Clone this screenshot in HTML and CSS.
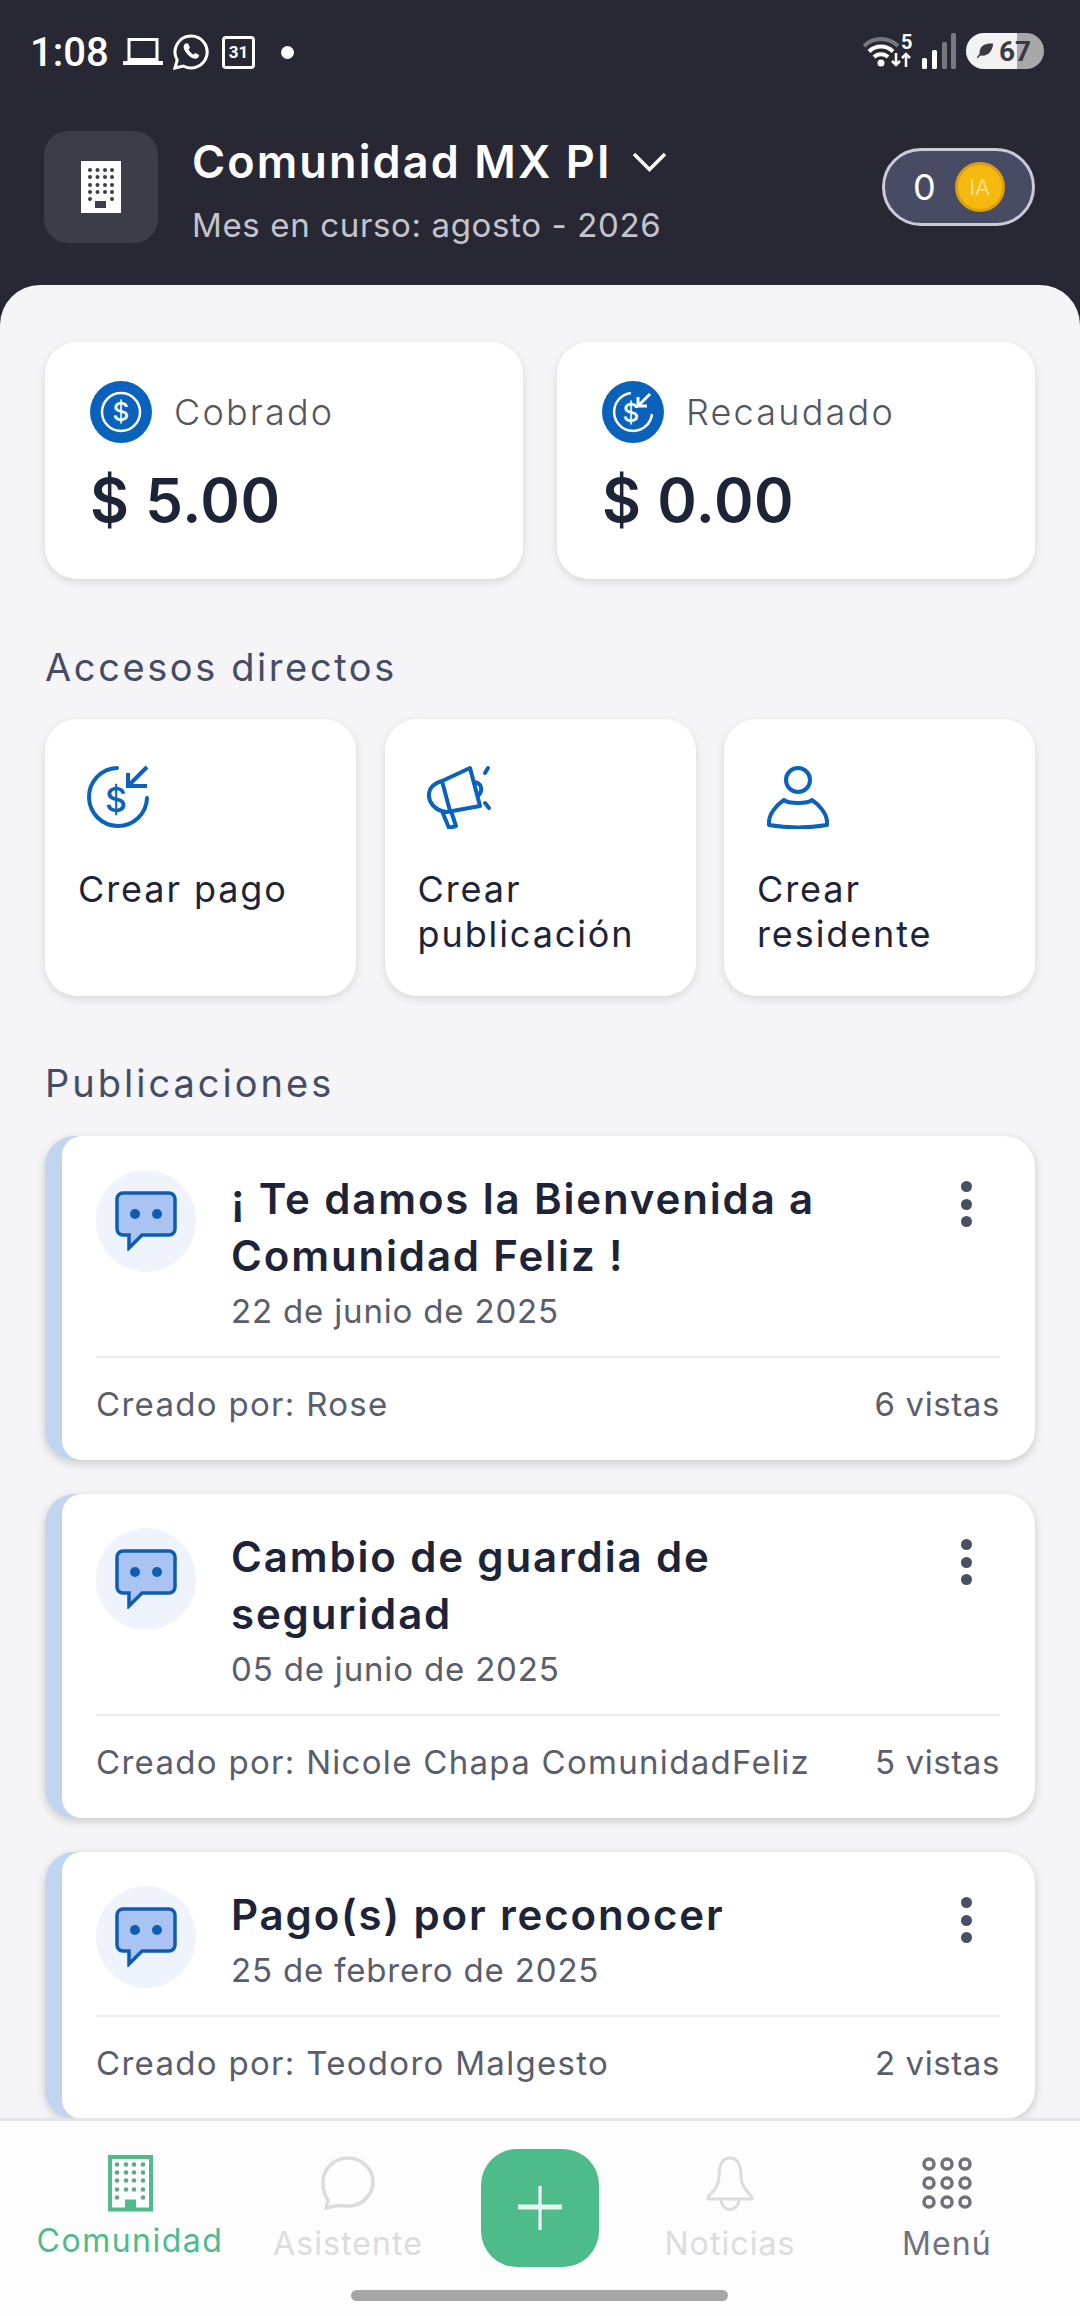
FILE: index.html
```html
<!DOCTYPE html>
<html>
<head>
  <link rel="stylesheet" href="styles.css">
</head>
<body>
  <div class="status-bar">
    <div class="status-left">
      <span class="clock">1:08</span>
      <svg class="st-laptop" width="40" height="30" viewBox="0 0 40 30"><path d="M6 2.500h28v20H6z" fill="none" stroke="#fff" stroke-width="3"/><path d="M1 26h38" stroke="#fff" stroke-width="4" stroke-linecap="round"/></svg>
      <svg class="st-wa" width="36" height="36" viewBox="0 0 36 36"><path d="M18 2a16 16 0 1 1-7.600 30L2 34l2.200-8A16 16 0 0 1 18 2z" fill="none" stroke="#fff" stroke-width="3"/><path d="M12.500 9.500c-2.500 1.500-2.500 5 .5 9s7.500 7 10.500 6c2-.7 3-2.500 2.500-3.500l-3.500-2-2 1.500c-2-.8-4-3-5-5l1.500-2-2-4z" fill="#fff"/></svg>
      <div class="st-cal">31</div>
      <span class="st-dot"></span>
    </div>
    <div class="status-right">
      <svg width="50" height="44" viewBox="0 -4 50 44">
        <path d="M1 13a24 24 0 0 1 34 0" fill="none" stroke="#77777f" stroke-width="4"/>
        <path d="M6 18.500a17 17 0 0 1 24 0M11 24a10 10 0 0 1 14 0" fill="none" stroke="#fff" stroke-width="4"/>
        <circle cx="18" cy="30" r="3.500" fill="#fff"/>
        <text x="38" y="16" class="st-five">5</text>
        <path d="M33 20v12m-4-4 4 4 4-4M43 34V21m-4 4 4-4 4 4" fill="none" stroke="#fff" stroke-width="2.500"/>
      </svg>
      <svg class="st-signal" width="34" height="36" viewBox="0 0 34 36">
        <rect x="0" y="25" width="5" height="11" rx="1.500" fill="#fff"/>
        <rect x="10" y="17" width="5" height="19" rx="1.500" fill="#fff"/>
        <rect x="20" y="9" width="5" height="27" rx="1.500" fill="#77777f"/>
        <rect x="29" y="0" width="5" height="36" rx="1.500" fill="#77777f"/>
      </svg>
      <div class="st-battery">
        <svg width="20" height="20" viewBox="0 0 20 22"><path d="M19 3C9 2 4 6 4 14l-3 4 1 1 3-3c8 1 13-4 14-13z" fill="#3b3b42"/></svg>
        <span>67</span>
      </div>
    </div>
  </div>

  <div class="header">
    <div class="logo-box">
      <svg width="40" height="52" viewBox="0 0 40 52" fill="#3d3d49">
        <rect width="40" height="52" fill="#fff"/>
        <circle cx="9" cy="9" r="2"/><circle cx="16.500" cy="9" r="2"/><circle cx="24" cy="9" r="2"/><circle cx="31" cy="9" r="2"/>
        <circle cx="9" cy="16" r="2"/><circle cx="16.500" cy="16" r="2"/><circle cx="24" cy="16" r="2"/><circle cx="31" cy="16" r="2"/>
        <circle cx="9" cy="24" r="2"/><circle cx="16.500" cy="24" r="2"/><circle cx="24" cy="24" r="2"/><circle cx="31" cy="24" r="2"/>
        <circle cx="9" cy="31" r="2"/><circle cx="16.500" cy="31" r="2"/><circle cx="24" cy="31" r="2"/><circle cx="31" cy="31" r="2"/>
        <circle cx="9" cy="38" r="2"/><circle cx="31" cy="38" r="2"/>
        <rect x="14" y="40" width="11" height="7"/>
      </svg>
    </div>
    <div class="community">
      <div class="community-name">
        Comunidad MX PI
        <svg width="37" height="22" viewBox="0 0 37 22"><path d="M3 3l15.500 15.500L34 3" fill="none" stroke="#fff" stroke-width="3.500"/></svg>
      </div>
      <div class="community-month">Mes en curso: agosto - 2026</div>
    </div>
    <div class="credits">
      <span class="credits-num">0</span>
      <span class="coin">IA</span>
    </div>
  </div>

  <div class="main">
    <div class="stats">
      <div class="stat-card">
        <div class="stat-top">
          <svg width="62" height="62" viewBox="0 0 62 62">
            <circle cx="31" cy="31" r="31" fill="#0a62bd"/>
            <circle cx="31" cy="31" r="19" fill="none" stroke="#fff" stroke-width="2.500"/>
            <text x="31" y="40" class="svg-dollar">$</text>
          </svg>
          <span class="stat-label">Cobrado</span>
        </div>
        <div class="stat-value">$ 5.00</div>
      </div>
      <div class="stat-card">
        <div class="stat-top">
          <svg width="62" height="62" viewBox="0 0 62 62">
            <circle cx="31" cy="31" r="31" fill="#0a62bd"/>
            <path d="M29 12a19 19 0 1 0 21 21" fill="none" stroke="#fff" stroke-width="2.500"/>
            <path d="M48 13L36 25m0-9v9h9" fill="none" stroke="#fff" stroke-width="3"/>
            <text x="29" y="41" class="svg-dollar">$</text>
          </svg>
          <span class="stat-label">Recaudado</span>
        </div>
        <div class="stat-value">$ 0.00</div>
      </div>
    </div>

    <h2 class="section-title">Accesos directos</h2>
    <div class="shortcuts">
      <div class="shortcut">
        <svg class="icon-pay" width="66" height="64" viewBox="0 0 66 64">
          <path d="M33 3a29 29 0 1 0 30 30" fill="none" stroke="#0a62bd" stroke-width="4" stroke-linecap="round"/>
          <path d="M63 2L44 21m0-13v13h19" fill="none" stroke="#0a62bd" stroke-width="4"/>
          <text x="32" y="47" class="svg-dollar-blue">$</text>
        </svg>
        <div class="shortcut-label">Crear pago</div>
      </div>
      <div class="shortcut">
        <svg width="66" height="64" viewBox="0 0 66 64">
          <path d="M16 16L44 3l10 38-33 6C8 46 2 36 3 28c1-7 6-10 13-12zM16 16l8 30M16 46l7 17 7-2-5-15" fill="none" stroke="#0a62bd" stroke-width="4" stroke-linejoin="round"/>
          <path d="M49 17c5 1 7 5 6 9-1 3-3 5-5 5" fill="none" stroke="#0a62bd" stroke-width="4"/>
          <path d="M59 8l3-5M59 38l4 5" stroke="#0a62bd" stroke-width="4" stroke-linecap="round"/>
        </svg>
        <div class="shortcut-label">Crear publicación</div>
      </div>
      <div class="shortcut">
        <svg width="66" height="64" viewBox="0 0 66 64">
          <circle cx="33" cy="15" r="12" fill="none" stroke="#0a62bd" stroke-width="4"/>
          <path d="M19 35c4 4 24 4 28 0 6 4 15 13 15 22v3c-18 3-40 3-58 0v-3c0-9 9-18 15-22z" fill="none" stroke="#0a62bd" stroke-width="4" stroke-linejoin="round"/>
        </svg>
        <div class="shortcut-label">Crear residente</div>
      </div>
    </div>

    <h2 class="section-title">Publicaciones</h2>
    <div class="posts">
      <div class="post">
        <div class="post-body">
          <div class="post-top">
            <div class="post-icon">
              <svg width="62" height="60" viewBox="0 0 62 60"><path d="M8 2h46a6 6 0 0 1 6 6v30a6 6 0 0 1-6 6H27L14 57V44H8a6 6 0 0 1-6-6V8a6 6 0 0 1 6-6z" fill="#a9c4f2" stroke="#0f5db0" stroke-width="3.500"/><circle cx="20" cy="23" r="5" fill="#0f5db0"/><circle cx="42" cy="23" r="5" fill="#0f5db0"/></svg>
            </div>
            <div class="post-text">
              <div class="post-title">¡ Te damos la Bienvenida a Comunidad Feliz !</div>
              <div class="post-date">22 de junio de 2025</div>
            </div>
            <div class="post-more"><i></i><i></i><i></i></div>
          </div>
          <div class="post-foot"><span>Creado por: Rose</span><span>6 vistas</span></div>
        </div>
      </div>
      <div class="post">
        <div class="post-body">
          <div class="post-top">
            <div class="post-icon">
              <svg width="62" height="60" viewBox="0 0 62 60"><path d="M8 2h46a6 6 0 0 1 6 6v30a6 6 0 0 1-6 6H27L14 57V44H8a6 6 0 0 1-6-6V8a6 6 0 0 1 6-6z" fill="#a9c4f2" stroke="#0f5db0" stroke-width="3.500"/><circle cx="20" cy="23" r="5" fill="#0f5db0"/><circle cx="42" cy="23" r="5" fill="#0f5db0"/></svg>
            </div>
            <div class="post-text">
              <div class="post-title">Cambio de guardia de seguridad</div>
              <div class="post-date">05 de junio de 2025</div>
            </div>
            <div class="post-more"><i></i><i></i><i></i></div>
          </div>
          <div class="post-foot"><span>Creado por: Nicole Chapa ComunidadFeliz</span><span>5 vistas</span></div>
        </div>
      </div>
      <div class="post">
        <div class="post-body">
          <div class="post-top">
            <div class="post-icon">
              <svg width="62" height="60" viewBox="0 0 62 60"><path d="M8 2h46a6 6 0 0 1 6 6v30a6 6 0 0 1-6 6H27L14 57V44H8a6 6 0 0 1-6-6V8a6 6 0 0 1 6-6z" fill="#a9c4f2" stroke="#0f5db0" stroke-width="3.500"/><circle cx="20" cy="23" r="5" fill="#0f5db0"/><circle cx="42" cy="23" r="5" fill="#0f5db0"/></svg>
            </div>
            <div class="post-text">
              <div class="post-title">Pago(s) por reconocer</div>
              <div class="post-date">25 de febrero de 2025</div>
            </div>
            <div class="post-more"><i></i><i></i><i></i></div>
          </div>
          <div class="post-foot"><span>Creado por: Teodoro Malgesto</span><span>2 vistas</span></div>
        </div>
      </div>
    </div>
  </div>

  <div class="bottom-nav">
    <div class="nav-row">
      <div class="nav-item active">
        <svg width="45" height="57" viewBox="0 0 45 57" fill="#5ea88a">
          <rect x="2" y="2.500" width="41" height="52.500" fill="#fff" stroke="#4dbb8a" stroke-width="4"/>
          <circle cx="9" cy="10" r="2.300"/><circle cx="18" cy="10" r="2.300"/><circle cx="26" cy="10" r="2.300"/><circle cx="35" cy="10" r="2.300"/>
          <circle cx="9" cy="18" r="2.300"/><circle cx="18" cy="18" r="2.300"/><circle cx="26" cy="18" r="2.300"/><circle cx="35" cy="18" r="2.300"/>
          <circle cx="9" cy="26" r="2.300"/><circle cx="18" cy="26" r="2.300"/><circle cx="26" cy="26" r="2.300"/><circle cx="35" cy="26" r="2.300"/>
          <circle cx="9" cy="35" r="2.300"/><circle cx="18" cy="35" r="2.300"/><circle cx="26" cy="35" r="2.300"/><circle cx="35" cy="35" r="2.300"/>
          <circle cx="9" cy="43" r="2.300"/><circle cx="35" cy="43" r="2.300"/>
          <rect x="17" y="45" width="11" height="10" fill="#4dbb8a"/>
        </svg>
        <span>Comunidad</span>
      </div>
      <div class="nav-item muted">
        <svg width="56" height="56" viewBox="0 0 56 56"><path d="M28 3c14 0 25 11 25 24S42 51 28 51c-5 0-9-1-13 0l-9 2 2-8C4 40 3 34 3 27 3 14 14 3 28 3z" fill="none" stroke="#dcdcdf" stroke-width="3.500" stroke-linejoin="round"/></svg>
        <span>Asistente</span>
      </div>
      <div class="nav-fab">
        <svg width="46" height="46" viewBox="0 0 46 46"><path d="M23 1v44M1 22h44" stroke="#fff" stroke-width="3"/><path d="M1 22h44" stroke="#e8f7f0" stroke-width="5"/></svg>
      </div>
      <div class="nav-item muted">
        <svg width="48" height="56" viewBox="0 0 48 56"><path d="M24 3c8 0 11 8 11 18 0 10 5 14 11 21v2H2v-2c6-7 11-11 11-21C13 11 16 3 24 3zM15 44c0 14 18 14 18 0" fill="none" stroke="#dcdcdf" stroke-width="3" stroke-linejoin="round"/></svg>
        <span>Noticias</span>
      </div>
      <div class="nav-item dark">
        <svg width="52" height="52" viewBox="0 0 52 52" fill="none" stroke="#70717c" stroke-width="3.500">
          <circle cx="8" cy="7" r="5"/><circle cx="26" cy="7" r="5"/><circle cx="44" cy="7" r="5"/>
          <circle cx="8" cy="26" r="5"/><circle cx="26" cy="26" r="5"/><circle cx="44" cy="26" r="5"/>
          <circle cx="8" cy="45" r="5"/><circle cx="26" cy="45" r="5"/><circle cx="44" cy="45" r="5"/>
        </svg>
        <span>Menú</span>
      </div>
    </div>
    <div class="home-bar"></div>
  </div>
</body>
</html>
```

FILE: styles.css
```css
* {
  box-sizing: border-box;
}

html, body {
  margin: 0;
  padding: 0;
}

body {
  font-family: Inter, "Noto Sans", sans-serif;
  background: #282835;
  width: 1080px;
  height: 2316px;
  overflow: hidden;
  display: flex;
  flex-direction: column;
}

/* status bar */
.status-bar {
  height: 100px;
  flex-shrink: 0;
  padding: 32px 36px 0 30px;
  display: flex;
  justify-content: space-between;
  align-items: flex-start;
  color: white;
}

.status-left {
  display: flex;
  align-items: center;
  height: 40px;
}

.clock {
  font-family: Roboto, sans-serif;
  font-size: 40px;
  font-weight: 500;
  width: 93px;
}

.st-wa {
  margin-left: 10px;
}

.st-cal {
  width: 33px;
  height: 33px;
  margin-left: 13px;
  border: 3px solid white;
  border-radius: 4px;
  font-family: Roboto, sans-serif;
  font-size: 17px;
  font-weight: 700;
  line-height: 27px;
  text-align: center;
}

.st-dot {
  width: 13px;
  height: 13px;
  margin-left: 26px;
  border-radius: 50%;
  background: white;
}

.status-right {
  display: flex;
  align-items: center;
  height: 38px;
}

.st-five {
  font-family: Roboto, sans-serif;
  font-size: 20px;
  font-weight: 700;
  fill: white;
}

.st-signal {
  margin-left: 9px;
}

.st-battery {
  width: 78px;
  height: 36px;
  margin-left: 10px;
  border-radius: 18px;
  background: linear-gradient(90deg, #f2f2f3 0, #f2f2f3 66%, #a8a8ab 66%, #a8a8ab 100%);
  display: flex;
  align-items: center;
  padding-left: 9px;
  gap: 4px;
  font-family: Roboto, sans-serif;
  font-size: 28px;
  font-weight: 700;
  color: #3b3b42;
}

/* header */
.header {
  height: 185px;
  flex-shrink: 0;
  padding: 31px 45px 0 44px;
  display: flex;
  align-items: flex-start;
}

.logo-box {
  width: 114px;
  height: 112px;
  border-radius: 24px;
  background: #3d3d49;
  display: flex;
  align-items: center;
  justify-content: center;
}

.community {
  flex: 1;
  padding: 6px 0 0 34px;
}

.community-name {
  display: flex;
  align-items: center;
  gap: 19px;
  font-size: 45px;
  font-weight: 600;
  line-height: 50px;
  letter-spacing: 2.1px;
  color: white;
}

.community-month {
  margin-top: 17px;
  font-size: 33px;
  line-height: 42px;
  letter-spacing: 0.64px;
  color: #c4c5cc;
}

.credits {
  width: 153px;
  height: 78px;
  margin-top: 17px;
  border: 3px solid #c9cbd6;
  border-radius: 39px;
  background: #474c64;
  display: flex;
  align-items: center;
  padding-left: 28px;
  gap: 19px;
}

.credits-num {
  font-size: 36px;
  color: white;
}

.coin {
  width: 50px;
  height: 50px;
  border-radius: 50%;
  background: #f5b90f;
  border: 3px solid #dd9f12;
  color: #f9df80;
  font-size: 22px;
  line-height: 44px;
  text-align: center;
}

/* main area */
.main {
  flex: 1;
  min-height: 0;
  overflow: hidden;
  background: #f5f5f7;
  border-radius: 40px 40px 0 0;
  padding: 57px 45px 0;
}

.stats {
  display: grid;
  grid-template-columns: 478px 478px;
  gap: 34px;
}

.stat-card {
  height: 237px;
  background: white;
  border-radius: 32px;
  padding: 39px 45px 0;
  box-shadow: 0 3px 10px rgba(0, 0, 0, 0.12);
}

.stat-top {
  display: flex;
  align-items: center;
  gap: 22px;
}

.stat-label {
  font-size: 36px;
  font-weight: 300;
  letter-spacing: 2.2px;
  color: #55575f;
}

.stat-value {
  margin-top: 22px;
  font-size: 60px;
  font-weight: 600;
  line-height: 70px;
  letter-spacing: 0.6px;
  color: #1e2438;
}

.svg-dollar {
  font-family: Inter, sans-serif;
  font-size: 26px;
  font-weight: 500;
  fill: white;
  text-anchor: middle;
}

.svg-dollar-blue {
  font-family: Inter, sans-serif;
  font-size: 34px;
  font-weight: 500;
  fill: #0a62bd;
  text-anchor: middle;
}

.section-title {
  margin: 66px 0 30px;
  font-size: 38px;
  font-weight: 400;
  line-height: 44px;
  letter-spacing: 2.6px;
  color: #474c66;
}

.shortcuts {
  display: grid;
  grid-template-columns: repeat(3, 1fr);
  gap: 28.5px;
}

.shortcut {
  height: 277px;
  background: white;
  border-radius: 32px;
  padding: 46px 20px 0 33px;
  box-shadow: 0 3px 10px rgba(0, 0, 0, 0.12);
}

.shortcut svg {
  display: block;
  margin-left: 8px;
}

.shortcut svg.icon-pay {
  margin-left: 6px;
}

.shortcut-label {
  margin-top: 38px;
  font-size: 36px;
  line-height: 45px;
  letter-spacing: 1.9px;
  color: #1e2438;
}

.shortcuts + .section-title {
  margin-top: 65px;
  margin-bottom: 31px;
  letter-spacing: 3px;
}

/* posts */
.posts {
  display: flex;
  flex-direction: column;
  gap: 34px;
}

.post {
  background: #c2d5f0;
  border-radius: 30px;
  padding-left: 17px;
  box-shadow: 0 3px 10px rgba(0, 0, 0, 0.18);
}

.post-body {
  background: white;
  border-radius: 20px 30px 30px 20px;
  padding: 34px 35px 34px 34px;
}

.post-top {
  display: flex;
  align-items: flex-start;
  border-bottom: 2px solid #ececee;
  padding-bottom: 23px;
}

.post-icon {
  width: 100px;
  height: 102px;
  flex-shrink: 0;
  border-radius: 50%;
  background: #eff4fc;
  display: flex;
  align-items: center;
  justify-content: center;
}

.post-text {
  flex: 1;
  padding-left: 35px;
}

.post-title {
  padding-right: 44px;
  font-size: 42px;
  font-weight: 600;
  line-height: 57px;
  letter-spacing: 1.85px;
  color: #1e2438;
}

.post-date {
  margin-top: 5px;
  font-size: 33px;
  line-height: 44px;
  letter-spacing: 0.83px;
  color: #5a5e6c;
}

.post-more {
  width: 34px;
  flex-shrink: 0;
  margin-right: 17px;
  padding-top: 11px;
  display: flex;
  flex-direction: column;
  align-items: center;
  gap: 6.5px;
}

.post-more i {
  display: block;
  width: 11px;
  height: 11px;
  border-radius: 50%;
  background: #4a4f63;
}

.post-foot {
  display: flex;
  justify-content: space-between;
  padding-top: 24px;
  font-size: 33px;
  line-height: 44px;
  letter-spacing: 1.3px;
  color: #5a5e6c;
}

.post-foot span:last-child {
  letter-spacing: 0.6px;
}

/* bottom navigation */
.bottom-nav {
  height: 198px;
  flex-shrink: 0;
  background: #fdfdfd;
  border-top: 3px solid #e4e4e6;
  padding-top: 28px;
  position: relative;
}

.nav-row {
  display: grid;
  grid-template-columns: 216px 220px 164px 216px 218px;
  padding-left: 22px;
}

.nav-item {
  display: flex;
  flex-direction: column;
  align-items: center;
  padding-top: 5px;
  font-size: 32px;
  line-height: 40px;
  letter-spacing: 1.1px;
}

.nav-item svg {
  height: 58px;
  margin-bottom: 9px;
}

.nav-item.active {
  color: #4dbb8a;
  letter-spacing: 1.5px;
}

.nav-item.muted {
  color: #dcdcdf;
}

.nav-item.dark {
  color: #70717c;
}

.nav-item.muted span, .nav-item.dark span {
  margin-top: 3px;
}

.nav-fab {
  width: 118px;
  height: 118px;
  justify-self: center;
  border-radius: 36px;
  background: #4dbb8a;
  display: flex;
  align-items: center;
  justify-content: center;
}

.home-bar {
  position: absolute;
  left: 351px;
  top: 169px;
  width: 377px;
  height: 11px;
  border-radius: 6px;
  background: #a6a6a6;
}
```
